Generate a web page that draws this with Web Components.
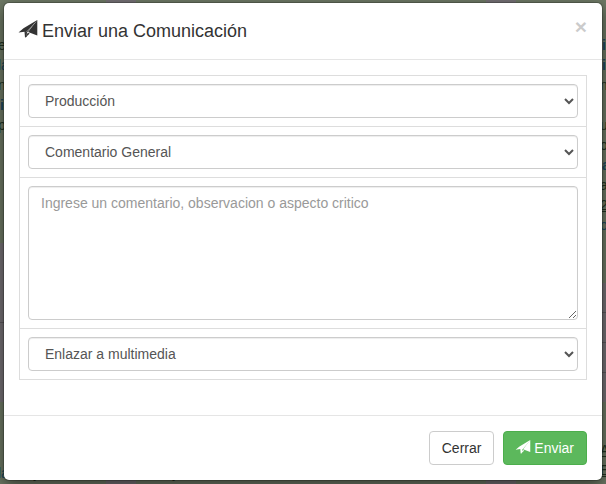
<!DOCTYPE html>
<html lang="es">
<head>
<meta charset="utf-8">
<meta name="viewport" content="width=device-width, initial-scale=1">
<title>Enviar una Comunicación</title>
<style>
    body {
        margin: 0;
        font: 14px/20px "Liberation Sans", Arial, sans-serif;
        color: #333;
    }
</style>
</head>
<body>
<page-backdrop></page-backdrop>
<modal-dialog>
    <plane-icon slot="icon"></plane-icon>
    <span slot="title">Enviar una Comunicación</span>
    <message-form></message-form>
    <action-button slot="footer">Cerrar</action-button>
    <action-button slot="footer" variant="success"><plane-icon></plane-icon> Enviar</action-button>
</modal-dialog>

<script>
class PlaneIcon extends HTMLElement {
    constructor() {
        super();
        const shadow = this.attachShadow({ mode: 'open' });
        shadow.innerHTML = `
          <style>
            :host {
                display: inline-block;
                width: 1em;
                height: 1em;
            }
            svg {
                display: block;
                width: 100%;
                height: 100%;
                overflow: visible;
            }
          </style>
          <svg viewBox="0 0 18 18" fill="currentColor" aria-hidden="true">
            <path d="M18.300 0 4.500 8.200-.5 12.500l6-.8.500 5.800 1.500-.5.500-4.500L17 1.800z"/>
            <path d="M18.300 0v15.500L9 12z"/>
            <path d="M6.500 17.500 8.700 12.700l2 .8z"/>
            <path d="M16.300 2.500 7 12.300" fill="none" stroke="#fff" stroke-opacity=".55" stroke-width=".6"/>
          </svg>
        `;
    }
}

class ActionButton extends HTMLElement {
    constructor() {
        super();
        const shadow = this.attachShadow({ mode: 'open' });
        shadow.innerHTML = `
          <style>
            :host {
                display: block;
            }
            button {
                display: block;
                padding: 6px 12px;
                border: 1px solid #ccc;
                border-radius: 4px;
                background: #fff;
                color: #333;
                font: inherit;
                cursor: pointer;
            }
            :host([variant="success"]) button {
                border-color: #4cae4c;
                background: #5cb85c;
                color: #fff;
            }
            ::slotted(plane-icon) {
                vertical-align: -1px;
            }
          </style>
          <button type="button"><slot></slot></button>
        `;
    }
}

class MessageForm extends HTMLElement {
    constructor() {
        super();
        const shadow = this.attachShadow({ mode: 'open' });
        shadow.innerHTML = `
          <style>
            :host {
                display: block;
            }
            form {
                margin-bottom: 20px;
                border: 1px solid #ddd;
            }
            .row {
                padding: 8px;
            }
            .row + .row {
                border-top: 1px solid #ddd;
            }
            select, textarea {
                display: block;
                box-sizing: border-box;
                width: 100%;
                height: 34px;
                margin: 0;
                padding: 6px 12px;
                border: 1px solid #ccc;
                border-radius: 4px;
                background-color: #fff;
                box-shadow: inset 0 1px 1px rgba(0, 0, 0, .075);
                color: #555;
                font: inherit;
            }
            textarea {
                height: 134px;
                resize: vertical;
            }
            textarea::placeholder {
                color: #999;
            }
          </style>
          <form>
            <div class="row">
                <select aria-label="Área"><option>Producción</option></select>
            </div>
            <div class="row">
                <select aria-label="Tipo de comentario"><option>Comentario General</option></select>
            </div>
            <div class="row">
                <textarea aria-label="Comentario" placeholder="Ingrese un comentario, observacion o aspecto critico"></textarea>
            </div>
            <div class="row">
                <select aria-label="Multimedia"><option>Enlazar a multimedia</option></select>
            </div>
          </form>
        `;
    }
}

class ModalDialog extends HTMLElement {
    constructor() {
        super();
        const shadow = this.attachShadow({ mode: 'open' });
        shadow.innerHTML = `
          <style>
            :host {
                display: block;
                position: absolute;
                inset: 2px 3px auto;
                border: 1px solid rgba(0, 0, 0, .2);
                border-radius: 6px;
                background: #fff;
                background-clip: padding-box;
                box-shadow: 0 5px 15px rgba(0, 0, 0, .5);
            }
            header {
                display: flex;
                justify-content: space-between;
                align-items: flex-start;
                padding: 15px;
                border-bottom: 1px solid #e5e5e5;
            }
            h4 {
                margin: 0;
                font-size: 18px;
                font-weight: 500;
                line-height: 26px;
            }
            ::slotted(plane-icon) {
                vertical-align: -1px;
            }
            .close {
                padding: 0;
                border: 0;
                background: none;
                color: #000;
                font: bold 21px/18px "Liberation Sans", Arial, sans-serif;
                opacity: .2;
                text-shadow: 0 1px 0 #fff;
                cursor: pointer;
            }
            .body {
                padding: 15px;
            }
            footer {
                display: flex;
                justify-content: flex-end;
                gap: 9px;
                padding: 15px;
                border-top: 1px solid #e5e5e5;
            }
          </style>
          <header>
            <h4><slot name="icon"></slot> <slot name="title"></slot></h4>
            <button class="close" type="button" aria-label="Cerrar ventana">×</button>
          </header>
          <div class="body"><slot></slot></div>
          <footer><slot name="footer"></slot></footer>
        `;
    }
    connectedCallback() {
        this.setAttribute('role', 'dialog');
    }
}

// dimmed page that stays behind the dialog
class PageBackdrop extends HTMLElement {
    constructor() {
        super();
        const shadow = this.attachShadow({ mode: 'open' });
        shadow.innerHTML = `
          <style>
            :host {
                display: grid;
                grid-template-columns: 106px 1fr 90px;
                gap: 30px;
                height: 100vh;
                overflow: hidden;
                background: #767276;
                color: #223322;
            }
            .column {
                display: flex;
                flex-direction: column;
                justify-content: space-between;
                min-width: 0;
            }
            .card {
                box-sizing: border-box;
                height: 243px;
                padding-top: 35px;
                overflow: hidden;
                background: #6f7a66;
            }
            .card.tall {
                height: 283px;
            }
            .card.end {
                height: 82px;
                padding-top: 61px;
            }
            .left .card {
                text-indent: -2px;
            }
            .right .card {
                padding-left: 84px;
            }
            .right .card.end {
                padding-top: 38px;
            }
            p {
                display: flex;
                gap: 26px;
                height: 20px;
                margin: 0;
            }
            .middle p {
                padding-left: 36px;
            }
            .link {
                color: #1c4a60;
            }
            .strong {
                padding-left: 2px;
                font-weight: bold;
            }
            .under {
                text-decoration: underline;
            }
            hr {
                width: 100%;
                margin: 0;
                border: 0;
                border-top: 1px solid #5c595c;
            }
          </style>
          <div class="column left">
            <div class="card">
                <p>e</p>
                <p class="link">la</p>
                <p>n</p>
                <p class="link strong">i</p>
                <p>pa</p>
            </div>
            <hr>
            <div class="card end"><p><span class="link">la</span><span>y</span></p></div>
          </div>
          <div class="column middle">
            <div class="card"></div>
            <div class="card end"><p>y</p></div>
          </div>
          <div class="column right">
            <div class="card tall">
                <p class="link strong">i</p>
                <p class="link strong">i</p>
                <p>n</p>
                <p></p>
                <p>u</p>
                <p>o</p>
                <p class="link strong">a</p>
                <p>a</p>
                <p class="under">2</p>
                <p class="link">o</p>
            </div>
            <hr>
            <hr>
            <hr>
            <div class="card end">
                <p class="under">A</p>
                <p class="under">E</p>
            </div>
          </div>
        `;
    }
}

customElements.define('plane-icon', PlaneIcon);
customElements.define('action-button', ActionButton);
customElements.define('message-form', MessageForm);
customElements.define('modal-dialog', ModalDialog);
customElements.define('page-backdrop', PageBackdrop);
</script>
</body>
</html>
